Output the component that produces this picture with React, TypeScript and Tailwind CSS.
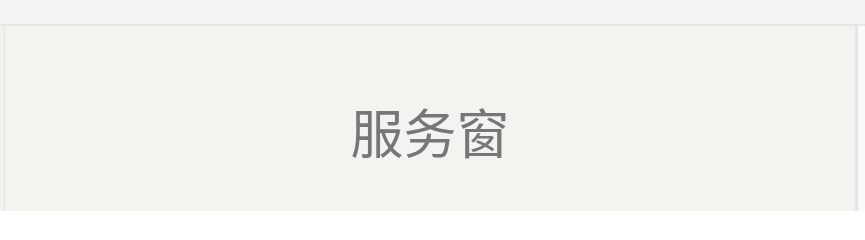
export default function App() {
  return (
    <div className="w-[865px] h-[211px] flex flex-col bg-[#f4f4f4] overflow-hidden">
      <div className="h-[26px] shrink-0 bg-[#f4f4f4] border-b-2 border-[#e6e6e6]" />
      <div className="flex flex-1">
        <div className="w-[5px] shrink-0 bg-[#f1f1f1] border-r border-[#e4e4e4]" />
        <div className="flex-1 bg-[#f3f3ef] flex items-center justify-center pt-[25px]">
          <span
            className="text-[53px] text-[#777777] leading-none"
            style={{ fontFamily: '"Noto Sans CJK SC", sans-serif' }}
          >
            服务窗
          </span>
        </div>
        <div className="w-[3px] shrink-0 bg-[#e6e6e6]" />
        <div className="w-[7px] shrink-0 bg-[#fafafa]" />
      </div>
    </div>
  )
}
